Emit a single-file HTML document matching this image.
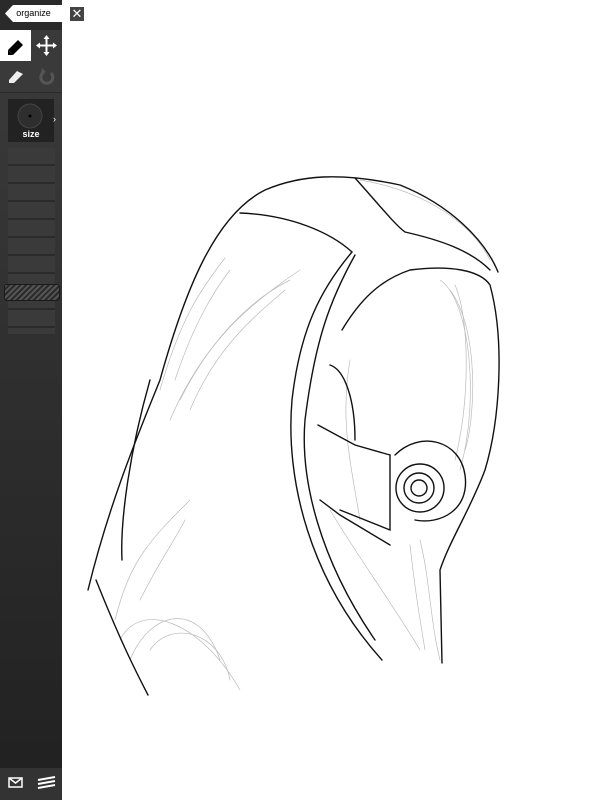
<!DOCTYPE html>
<html><head><style>
body{margin:0;width:600px;height:800px;background:#fff;position:relative;overflow:hidden;font-family:"Liberation Sans",sans-serif}
#bar{position:absolute;left:0;top:0;width:62px;height:800px;background:linear-gradient(#3c3c3c,#2e2e2e 50%,#222 95%)}
#top{position:absolute;left:0;top:0;width:62px;height:30px;background:#2a2a2a}
.tag{position:absolute;left:5px;top:5px;width:57px;height:17px;background:#fff;font-size:9px;line-height:17px;text-align:center;clip-path:polygon(8px 0,100% 0,100% 100%,8px 100%,0 50%)}
.x{position:absolute;left:70px;top:7px;width:14px;height:14px;background:#444;color:#fff;font-size:13px;line-height:14px;text-align:center}
.cell{position:absolute;width:31px;height:31px}
#slider{position:absolute;left:8px;top:148px;width:47px;height:186px;background:repeating-linear-gradient(#3a3a3a 0 16px,#2a2a2a 16px 18px)}
#knob{position:absolute;left:4px;top:284px;width:54px;height:15px;border-radius:3px;background:repeating-linear-gradient(135deg,#555 0 2px,#2a2a2a 2px 4px);border:1px solid #1a1a1a}
#bot{position:absolute;left:0;top:768px;width:62px;height:32px;background:#333}
</style></head><body>
<div id="bar"></div>
<div id="top"></div>
<div class="tag">organize</div>
<div class="x">✕</div>
<div class="cell" style="left:0;top:30px;background:#fff"><svg width="31" height="31"><path d="M8 20 L18 10 L23 15 L13 25 Z" fill="#000"/><path d="M8 20 L13 25 L8 25Z" fill="#000"/></svg></div>
<div class="cell" style="left:31px;top:30px;background:#3a3a3a"><svg width="31" height="31"><path d="M15.5 7v17M7 15.5h17" stroke="#fff" stroke-width="2"/><path d="M15.5 5l-3 4h6zM15.5 26l-3-4h6zM5 15.5l4-3v6zM26 15.5l-4-3v6z" fill="#fff"/></svg></div>
<div class="cell" style="left:0;top:61px;background:#3a3a3a;border-right:1px solid #2a2a2a"><svg width="31" height="31"><path d="M9 19 L17 10 L23 13 L14 22 L9 22Z" fill="#eee"/></svg></div>
<div class="cell" style="left:31px;top:61px;background:#3a3a3a"><svg width="31" height="31"><path d="M20 12a6 6 0 1 1-7-1" stroke="#555" stroke-width="3" fill="none"/><path d="M11 7l4 4-5 2z" fill="#555"/></svg></div>
<div style="position:absolute;left:0;top:92px;width:62px;height:1px;background:#2a2a2a"></div>
<div style="position:absolute;left:8px;top:99px;width:46px;height:43px;background:#222"><svg width="46" height="30"><circle cx="22" cy="17" r="12" fill="#2e2e2e" stroke="#444"/><circle cx="22" cy="17" r="1.5" fill="#000"/></svg><div style="position:absolute;top:30px;width:46px;text-align:center;color:#fff;font-size:9px;font-weight:bold">size</div></div>
<div style="position:absolute;left:53px;top:114px;color:#fff;font-size:9px">›</div>
<div id="slider"></div>
<div id="knob"></div>
<div id="bot"><svg width="62" height="32"><rect x="9" y="10" width="13" height="9" fill="none" stroke="#fff" stroke-width="1.5"/><path d="M9 10l6.5 5 6.5-5" stroke="#fff" stroke-width="1.5" fill="none"/><path d="M38 12l17-3M38 16l17-3M38 20l17-3" stroke="#fff" stroke-width="2"/></svg></div>
<svg style="position:absolute;left:0;top:0" width="600" height="800" fill="none" stroke-linecap="round">
<g stroke="#bbb" stroke-width="0.7">
<path d="M160 390 C180 320 200 290 225 258"/><path d="M170 420 C200 350 240 310 300 270"/><path d="M180 400 C210 340 250 300 290 280"/>
<path d="M190 410 C215 350 250 320 285 290"/><path d="M175 380 C195 320 215 290 230 270"/>
<path d="M120 640 C140 600 200 620 240 690"/><path d="M150 650 C170 620 220 630 230 680"/><path d="M115 620 C130 560 150 540 190 500"/>
<path d="M130 660 C150 610 200 600 220 660"/><path d="M140 600 C160 560 175 540 185 520"/>
<path d="M440 280 C470 300 480 400 460 470"/><path d="M450 290 C480 330 475 420 465 450"/><path d="M455 285 C470 320 470 400 455 460"/>
<path d="M330 510 C360 560 390 600 420 650"/><path d="M420 540 C430 580 430 620 440 660"/><path d="M410 545 C415 590 420 620 425 650"/>
<path d="M360 180 C420 190 470 220 490 260"/><path d="M350 360 C340 420 350 460 360 520"/>
</g>
<g stroke="#111" stroke-width="1.4">
<path d="M88 590 C110 500 140 430 160 380 C185 290 215 215 265 190 C300 175 340 172 400 185 C450 205 485 240 498 272"/>
<path d="M96 580 C120 640 135 670 148 695"/>
<path d="M240 213 C290 215 330 232 352 252 C320 290 300 330 292 400 C285 480 310 580 382 660"/>
<path d="M355 178 C375 200 395 225 405 232 C440 240 470 250 490 270"/>
<path d="M355 255 C330 300 315 340 305 420 C300 480 320 560 375 640"/>
<path d="M342 330 C360 300 380 280 410 270 C450 265 480 270 490 285 C505 340 500 420 485 470 C470 510 450 540 440 570 L442 663"/>
<path d="M330 365 C345 370 355 400 355 440"/><path d="M318 425 L355 445 L390 455"/>
<path d="M320 500 L340 515 L390 545"/><path d="M340 510 L390 530 L390 455"/>
<path d="M395 455 C420 430 460 440 465 475 C470 510 440 525 415 520"/>
<circle cx="420" cy="488" r="24"/><circle cx="419" cy="488" r="15"/><circle cx="419" cy="488" r="8"/>
<path d="M150 380 C130 450 120 520 122 560"/>
</g>
</svg>
</body></html>
